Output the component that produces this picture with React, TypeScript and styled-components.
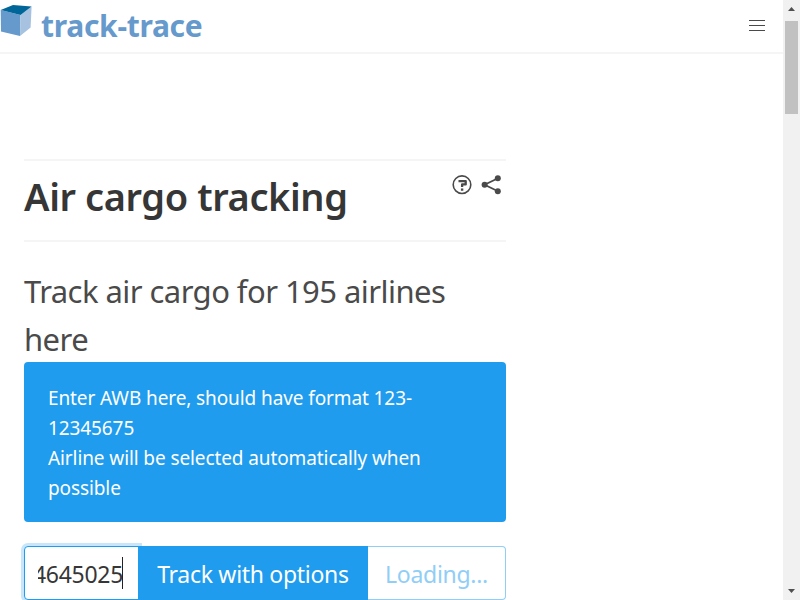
import React from "react";
import styled, { createGlobalStyle } from "styled-components";

const GlobalStyle = createGlobalStyle`
  *, *::before, *::after { box-sizing: border-box; }
  html, body { margin: 0; overflow: hidden; background: #fff; }
  body {
    font-family: "Segoe UI", "Noto Sans", sans-serif;
    color: #4a4a4a;
  }
`;

const Window = styled.div`
  display: grid;
  grid-template-columns: 783px 17px;
  height: 600px;
  overflow: hidden;
`;

const Page = styled.div`
  height: 600px;
  overflow: hidden;
`;

const Navbar = styled.header`
  display: flex;
  align-items: center;
  justify-content: space-between;
  height: 54px;
  border-bottom: 2px solid #f5f5f5;
`;

const Brand = styled.a`
  display: flex;
  align-items: center;
  height: 52px;
  color: #6699cc;
`;

const CubeLogo = styled.svg`
  display: block;
  width: 32px;
  height: 38px;
  margin-right: 9px;
  margin-bottom: 14px;
`;

const BrandName = styled.span`
  font-size: 30px;
  line-height: 52px;
  font-weight: 700;
  letter-spacing: -0.3px;
  white-space: nowrap;
`;

const Burger = styled.button`
  display: flex;
  flex-direction: column;
  align-items: center;
  justify-content: center;
  gap: 4px;
  width: 52px;
  height: 52px;
  padding: 0 0 1px;
  border: 0;
  background: none;
`;

const BurgerBar = styled.span`
  width: 16px;
  height: 1px;
  background: #4a4a4a;
`;

const Content = styled.main`
  width: 482px;
  margin: 105px 0 0 24px;
`;

const TitleRow = styled.div`
  display: flex;
  justify-content: space-between;
  height: 83px;
  border-top: 2px solid #f5f5f5;
  border-bottom: 2px solid #f5f5f5;
`;

const Title = styled.h1`
  margin: 0;
  padding-top: 10px;
  color: #363636;
  font-size: 38px;
  font-weight: 600;
  line-height: 50px;
  letter-spacing: -0.4px;
  white-space: nowrap;
`;

const Actions = styled.div`
  display: flex;
  gap: 9px;
  padding: 13px 4px 0 0;
`;

const ActionIcon = styled.svg`
  display: block;
  width: 21px;
  height: 22px;
`;

const Subtitle = styled.h2`
  margin: 0;
  padding-top: 25px;
  height: 120px;
  font-size: 31px;
  font-weight: 400;
  line-height: 48px;
  letter-spacing: -0.55px;
  white-space: nowrap;
`;

const Notice = styled.div`
  height: 160px;
  margin-bottom: 24px;
  padding: 21px 24px 19px;
  border-radius: 4px;
  background: #209cee;
  color: #fff;
`;

const NoticeLine = styled.div`
  font-size: 19px;
  line-height: 30px;
  letter-spacing: -0.1px;
  white-space: nowrap;
`;

const Field = styled.div`
  display: flex;
  height: 54px;
`;

const NumberBox = styled.div`
  display: flex;
  align-items: center;
  width: 115px;
  padding-left: 13px;
  border: 1px solid #209cee;
  border-radius: 4px 0 0 4px;
  background: #fff;
  box-shadow: 0 0 0 3px rgba(32, 156, 238, 0.25);
  color: #363636;
`;

const NumberValue = styled.div`
  display: flex;
  flex: none;
  justify-content: flex-end;
  width: 85px;
  padding-top: 2px;
  overflow: hidden;
  font-size: 23px;
  line-height: 36px;
  letter-spacing: -0.3px;
  white-space: nowrap;
`;

const Caret = styled.span`
  flex: none;
  width: 1px;
  height: 32px;
  margin-left: -1px;
  background: #222;
`;

const FieldButton = styled.button<{ $outlined?: boolean; $width: number }>`
  position: relative;
  width: ${(p) => p.$width}px;
  height: 54px;
  margin-left: ${(p) => (p.$outlined ? 0 : -1)}px;
  padding: 2px 0 0;
  border: 1px solid ${(p) => (p.$outlined ? "#90cef7" : "#209cee")};
  border-radius: ${(p) => (p.$outlined ? "0 4px 4px 0" : "0")};
  border-left-width: ${(p) => (p.$outlined ? 0 : 1)}px;
  background: ${(p) => (p.$outlined ? "#fff" : "#209cee")};
  color: ${(p) => (p.$outlined ? "#90cef7" : "#fff")};
  font-family: inherit;
  font-size: 23px;
  line-height: 50px;
  letter-spacing: -0.3px;
  white-space: nowrap;
`;

const Scrollbar = styled.aside`
  display: flex;
  flex-direction: column;
  justify-content: space-between;
  align-items: center;
  height: 600px;
  background: #f1f1f1;
`;

const ScrollTop = styled.div`
  display: flex;
  flex-direction: column;
  align-items: center;
`;

const Arrow = styled.svg`
  display: block;
  width: 17px;
  height: 17px;
`;

const Thumb = styled.div`
  width: 13px;
  height: 93px;
  margin-top: 4px;
  background: #c1c1c1;
`;

export default function App() {
  return (
    <Window>
      <GlobalStyle />
      <Page>
        <Navbar>
          <Brand>
            <CubeLogo viewBox="0 0 32 38">
              <path d="M0.7 10 20.5 15 20 36 1 31.5Z" fill="#6699cc" />
              <path d="M20.5 15 31.6 6.5 30.6 27.5 20 36Z" fill="#a6c2e0" />
              <path d="M0.7 10 13 5 31.6 6.5 20.5 15Z" fill="#006699" />
            </CubeLogo>
            <BrandName>track-trace</BrandName>
          </Brand>
          <Burger aria-label="Menu">
            <BurgerBar />
            <BurgerBar />
            <BurgerBar />
          </Burger>
        </Navbar>
        <Content>
          <TitleRow>
            <Title>Air cargo tracking</Title>
            <Actions>
              <ActionIcon viewBox="0 0 21 22" fill="none" stroke="#4a4a4a">
                <circle cx="11" cy="10.7" r="8.8" strokeWidth="1.6" />
                <path d="M7.5 7.1H14.7V10.4H11.1V12.9" strokeWidth="2.3" strokeLinejoin="round" />
                <path d="M9.9 15.6H12.3" strokeWidth="2.3" />
              </ActionIcon>
              <ActionIcon viewBox="0 0 21 22" fill="#4a4a4a">
                <path d="M17 4.2 3.6 10.7 17 17.2" fill="none" stroke="#4a4a4a" strokeWidth="1.8" />
                <circle cx="16.8" cy="4.2" r="3" />
                <circle cx="3.6" cy="10.7" r="3" />
                <circle cx="16.8" cy="17.2" r="3" />
              </ActionIcon>
            </Actions>
          </TitleRow>
          <Subtitle>
            Track air cargo for 195 airlines
            <br />
            here
          </Subtitle>
          <Notice>
            <NoticeLine>Enter AWB here, should have format 123-</NoticeLine>
            <NoticeLine>12345675</NoticeLine>
            <NoticeLine>Airline will be selected automatically when</NoticeLine>
            <NoticeLine>possible</NoticeLine>
          </Notice>
          <Field>
            <NumberBox>
              <NumberValue>4645025</NumberValue>
              <Caret />
            </NumberBox>
            <FieldButton $width={230}>Track with options</FieldButton>
            <FieldButton $width={138} $outlined>
              Loading...
            </FieldButton>
          </Field>
        </Content>
      </Page>
      <Scrollbar>
        <ScrollTop>
          <Arrow viewBox="0 0 17 17">
            <path d="M5 11H12L8.5 7Z" fill="#505050" />
          </Arrow>
          <Thumb />
        </ScrollTop>
        <Arrow viewBox="0 0 17 17">
          <path d="M5 6H12L8.5 10Z" fill="#505050" />
        </Arrow>
      </Scrollbar>
    </Window>
  );
}
